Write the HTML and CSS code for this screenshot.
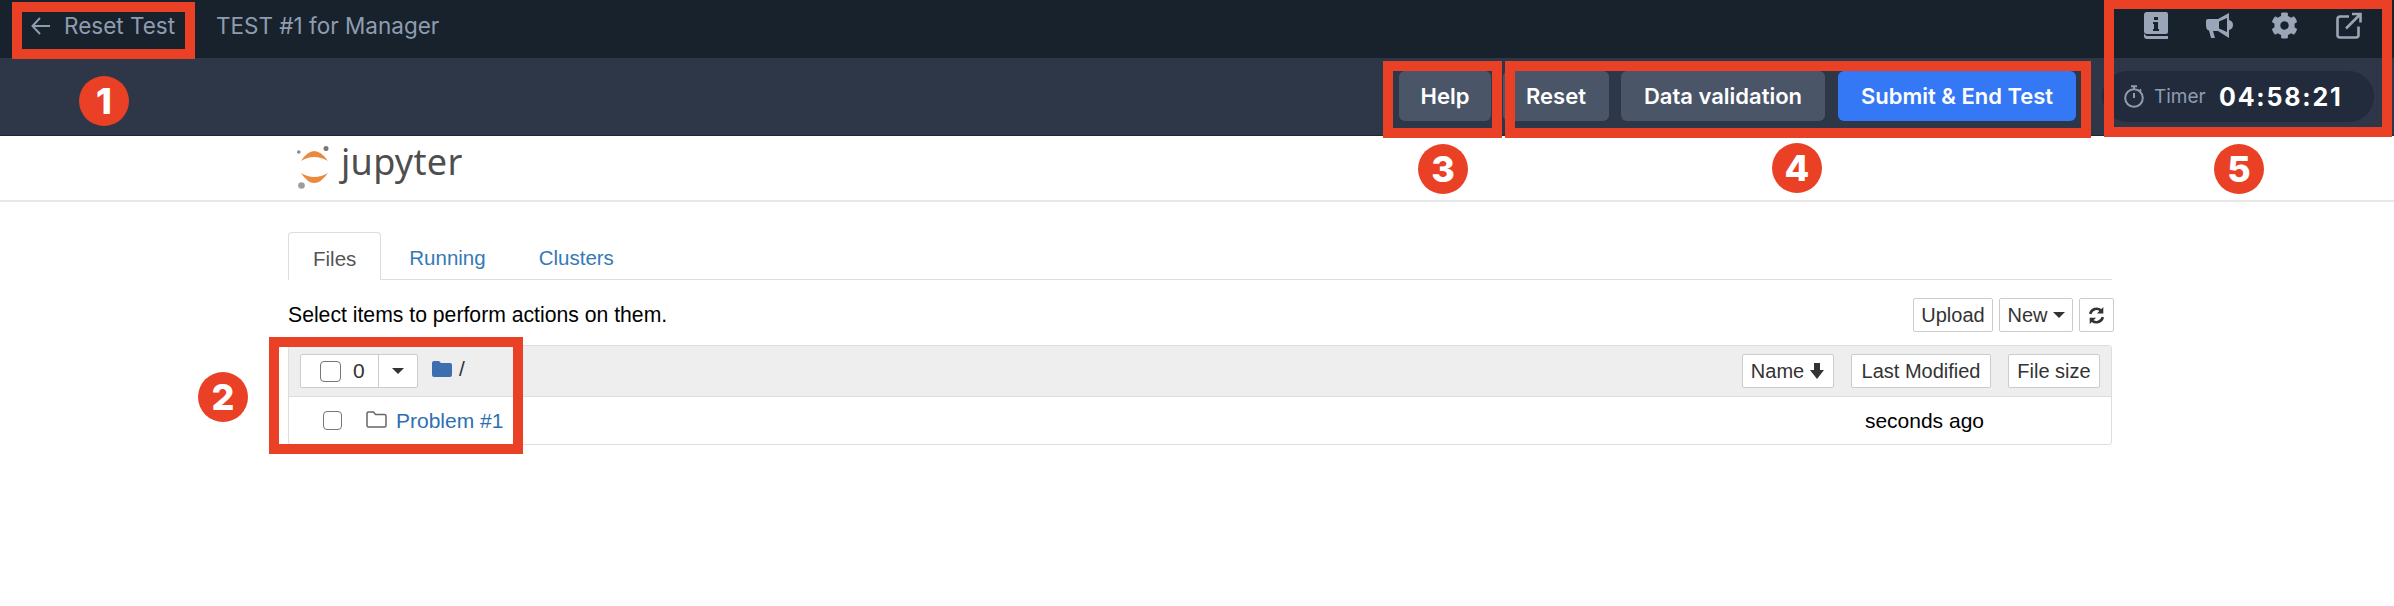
FILE: index.html
```html
<!DOCTYPE html>
<html lang="en">
  <head>
    <meta charset="UTF-8" />
    <title>TEST #1 for Manager</title>
    <link rel="stylesheet" href="styles.css">
  </head>
  <body>
    <header class="topbar">
      <svg class="back-icon" viewBox="0 0 19 18"><path d="M9 1 1.500 9 9 17M2 9h17" /></svg>
      <span class="back-label">Reset Test</span>
      <span class="test-title">TEST #1 for Manager</span>
      <div class="top-icons">
        <svg class="icon-book" viewBox="0 0 24 27"><path fill-rule="evenodd" d="M3 0h19a2 2 0 0 1 2 2v18a2 2 0 0 1-2 2H3a3 3 0 0 1-3-3V3a3 3 0 0 1 3-3zm7 5v3h4V5zm-1 5v2h1v5H9v2h6v-2h-1v-7z" /><path d="M0 21q1 3 3 3h21v3H3q-3 0-3-3z" /></svg>
        <svg class="icon-horn" viewBox="0 0 27 25"><path fill-rule="evenodd" d="M2 6h10L23 0v7q4 1 4 5t-4 5v8L12 18H7l2 7H5L3 17.500Q0 17 0 12V8q0-2 2-2zm11 2.500v7l8 3.500V5z" /></svg>
        <svg class="icon-gear" viewBox="0 0 512 512"><path d="M487.4 315.7l-42.6-24.6c4.3-23.2 4.3-47 0-70.2l42.6-24.6c4.9-2.8 7.1-8.6 5.5-14-11.1-35.6-30-67.8-54.7-94.6-3.8-4.1-10-5.1-14.8-2.3L380.8 110c-17.9-15.4-38.5-27.3-60.8-35.1V25.8c0-5.6-3.9-10.5-9.4-11.7-36.7-8.2-74.3-7.8-109.2 0-5.5 1.2-9.4 6.1-9.4 11.7V75c-22.2 7.9-42.8 19.8-60.8 35.1L88.7 85.5c-4.9-2.8-11-1.9-14.8 2.3-24.7 26.7-43.6 58.9-54.7 94.6-1.7 5.4.6 11.2 5.5 14L67.3 221c-4.3 23.2-4.3 47 0 70.2l-42.6 24.6c-4.9 2.8-7.1 8.6-5.5 14 11.1 35.6 30 67.8 54.7 94.6 3.8 4.1 10 5.1 14.8 2.3l42.6-24.6c17.9 15.4 38.5 27.3 60.8 35.1v49.2c0 5.6 3.9 10.5 9.4 11.7 36.7 8.2 74.3 7.8 109.2 0 5.5-1.2 9.4-6.1 9.4-11.7v-49.2c22.2-7.9 42.8-19.8 60.8-35.1l42.6 24.6c4.9 2.8 11 1.9 14.8-2.3 24.7-26.7 43.6-58.9 54.7-94.6 1.5-5.5-.7-11.3-5.6-14.1zM256 336c-44.1 0-80-35.9-80-80s35.9-80 80-80 80 35.9 80 80-35.9 80-80 80z" /></svg>
        <svg class="icon-open" viewBox="0 0 26 26"><path d="M13 4H4a2.500 2.500 0 0 0-2.500 2.500v16A2.500 2.500 0 0 0 4 25h16a2.500 2.500 0 0 0 2.500-2.500V14M10 16 24 2M16 1.500h8.500V10" /></svg>
      </div>
    </header>

    <div class="toolbar">
      <button class="btn btn-help">Help</button>
      <button class="btn btn-reset">Reset</button>
      <button class="btn btn-validate">Data validation</button>
      <button class="btn btn-submit">Submit &amp; End Test</button>
      <div class="timer">
        <svg class="timer-icon" viewBox="0 0 20 23"><circle cx="10" cy="13" r="8.800" /><path d="M7 1.200h6M10 1.500v3M10 8v5M17 4.500l-1.500 1.500" /></svg>
        <span class="timer-label">Timer</span>
        <span class="timer-value">04:58:21</span>
      </div>
    </div>

    <div class="jp-header">
      <svg class="jp-logo" viewBox="0 0 33 44">
        <path fill="#e98a3c" d="M4 15Q17 -5 31 15 17 7 4 15zM4 27Q17 35 31 27 17 47 4 27z" />
        <circle cx="29" cy="2.500" r="2.500" fill="#767677" />
        <circle cx="1.800" cy="6" r="1.800" fill="#8a8a8a" />
        <circle cx="4.500" cy="39.500" r="3.300" fill="#9e9e9e" />
      </svg>
      <span class="jp-word">jupyter</span>
    </div>

    <main class="container">
      <ul class="tabs">
        <li class="tab active">Files</li>
        <li class="tab">Running</li>
        <li class="tab">Clusters</li>
      </ul>

      <div class="actions">
        <span class="select-text">Select items to perform actions on them.</span>
        <div class="action-btns">
          <span class="small-btn btn-upload">Upload</span>
          <span class="small-btn btn-new">New <i class="caret"></i></span>
          <span class="small-btn btn-refresh">
            <svg viewBox="0 0 20 20"><path d="M2.500 8A8 8 0 0 1 16 4.500M17.500 12A8 8 0 0 1 4 15.500" /><path class="solid" d="M18 0v7.500h-7.500zM2 20v-7.500h7.500z" /></svg>
          </span>
        </div>
      </div>

      <section class="file-list">
        <div class="list-head">
          <div class="select-group">
            <span class="select-left"><i class="check"></i><span>0</span></span>
            <span class="select-right"><i class="caret"></i></span>
          </div>
          <svg class="folder-solid" viewBox="0 0 20 16"><path d="M2 0h5l2 2h9a2 2 0 0 1 2 2v10a2 2 0 0 1-2 2H2a2 2 0 0 1-2-2V2a2 2 0 0 1 2-2z" /></svg>
          <span class="crumb">/</span>
          <div class="sort-btns">
            <span class="small-btn sort-name">Name
              <svg viewBox="0 0 16 16"><path d="M5 0h6v7h4l-7 9-7-9h4z" /></svg>
            </span>
            <span class="small-btn sort-modified">Last Modified</span>
            <span class="small-btn sort-size">File size</span>
          </div>
        </div>
        <div class="list-row">
          <i class="check check-row"></i>
          <svg class="folder-line" viewBox="0 0 21 17"><path d="M2.500 1h5l2 2.500h9a1.500 1.500 0 0 1 1.500 1.500v9.500a1.500 1.500 0 0 1-1.500 1.500h-16A1.500 1.500 0 0 1 1 14.500v-12A1.500 1.500 0 0 1 2.500 1z" /></svg>
          <span class="file-name">Problem #1</span>
          <span class="file-time">seconds ago</span>
        </div>
      </section>
    </main>

    <div class="mark mark-1"></div>
    <div class="mark mark-2"></div>
    <div class="mark mark-3"></div>
    <div class="mark mark-4"></div>
    <div class="mark mark-5"></div>
    <div class="badge badge-1">1</div>
    <div class="badge badge-2">2</div>
    <div class="badge badge-3">3</div>
    <div class="badge badge-4">4</div>
    <div class="badge badge-5">5</div>
  </body>
</html>
```

FILE: styles.css
```css
html,
body {
  margin: 0;
  padding: 0;
  background-color: #fff;
  font-family: "Liberation Sans", sans-serif;
  overflow: hidden;
}
.topbar {
  display: flex;
  align-items: center;
  height: 58px;
  padding: 0 32px 7px 31px;
  box-sizing: border-box;
  background-color: #18222c;
  font-family: Inter, sans-serif;
  font-size: 22.500px;
  color: #8f9cb0;
}
.back-icon {
  width: 19px;
  height: 18px;
  margin-right: 14px;
  fill: none;
  stroke: #8f9cb0;
  stroke-width: 2;
}
.back-label {
  width: 111px;
  white-space: nowrap;
}
.test-title {
  margin-left: 41px;
}
.top-icons {
  display: flex;
  align-items: center;
  margin-left: auto;
  gap: 38px;
  height: 27px;
}
.top-icons svg {
  display: block;
  height: 27px;
  fill: #9aa6b8;
}
.icon-book {
  width: 24px;
}
.icon-horn {
  width: 27px;
}
.icon-gear {
  width: 27px;
}
.icon-open {
  width: 26px;
  fill: none !important;
  stroke: #9aa6b8;
  stroke-width: 2.600;
}
.toolbar {
  display: flex;
  align-items: flex-start;
  height: 78px;
  padding: 13px 20px 0 0;
  box-sizing: border-box;
  justify-content: flex-end;
  background-color: #2d3748;
  border-bottom: 1px solid #1f2733;
}
.btn {
  height: 50px;
  padding: 0;
  border: none;
  border-radius: 6px;
  background-color: #4a5568;
  color: #fff;
  font-family: Inter, sans-serif;
  font-size: 22px;
  font-weight: 600;
}
.btn-help {
  width: 92px;
  margin-right: 12px;
}
.btn-reset {
  width: 106px;
  margin-right: 12px;
}
.btn-validate {
  width: 204px;
  margin-right: 13px;
}
.btn-submit {
  width: 238px;
  background-color: #3478f6;
}
.timer {
  display: flex;
  align-items: center;
  width: 272px;
  height: 51px;
  margin-left: 26px;
  padding-left: 22px;
  box-sizing: border-box;
  border-radius: 26px;
  background-color: #222b3b;
  font-family: Inter, sans-serif;
}
.timer-icon {
  width: 20px;
  height: 23px;
  margin-right: 10px;
  fill: none;
  stroke: #8f9cb0;
  stroke-width: 2;
}
.timer-label {
  width: 65px;
  font-size: 19px;
  color: #8f9cb0;
}
.timer-value {
  font-size: 25px;
  font-weight: 700;
  letter-spacing: 1.800px;
  color: #fff;
}
.jp-header {
  display: flex;
  align-items: flex-start;
  height: 64px;
  padding-left: 297px;
  border-bottom: 2px solid #e7e7e7;
}
.jp-logo {
  width: 33px;
  height: 44px;
  margin-top: 10px;
}
.jp-word {
  margin: 1px 0 0 11px;
  font-family: "Noto Sans", sans-serif;
  font-size: 36px;
  line-height: 50px;
  letter-spacing: 0.300px;
  color: #4e4e4e;
}
.container {
  margin: 30px 0 0 288px;
  width: 1824px;
  font-size: 21px;
  color: #000;
}
.tabs {
  display: flex;
  list-style-type: none;
  margin: 0;
  padding: 0;
  height: 47px;
  border-bottom: 1px solid #ddd;
  font-size: 20.500px;
}
.tab {
  height: 47px;
  line-height: 52px;
  padding: 0 25px;
  margin-right: 3px;
  color: #337ab7;
  box-sizing: border-box;
}
.tab.active {
  height: 48px;
  padding: 0 24px;
  background-color: #fff;
  border: 1px solid #ddd;
  border-bottom: none;
  border-radius: 4px 4px 0 0;
  color: #555;
}
.actions {
  display: flex;
  align-items: center;
  justify-content: space-between;
  margin: 18px -2px 13px 0;
  height: 34px;
  line-height: 30px;
}
.select-text {
  font-size: 21.200px;
}
.action-btns {
  display: flex;
  gap: 6px;
}
.small-btn {
  display: flex;
  align-items: center;
  justify-content: center;
  height: 34px;
  box-sizing: border-box;
  background-color: #fff;
  border: 1px solid #ccc;
  border-radius: 2px;
  font-size: 20px;
  color: #333;
}
.btn-upload {
  width: 80px;
}
.btn-new {
  width: 74px;
  gap: 5px;
}
.btn-refresh {
  width: 35px;
}
.btn-refresh svg {
  width: 17px;
  height: 17px;
  fill: none;
  stroke: #333;
  stroke-width: 3;
}
.btn-refresh .solid {
  fill: #333;
  stroke: none;
}
.caret {
  display: inline-block;
  width: 0;
  height: 0;
  border-top: 6px solid #333;
  border-left: 6px solid transparent;
  border-right: 6px solid transparent;
}
.file-list {
  height: 100px;
  box-sizing: border-box;
  border: 1px solid #ddd;
  border-radius: 3px;
}
.list-head {
  display: flex;
  align-items: center;
  height: 51px;
  padding: 0 11px;
  box-sizing: border-box;
  background-color: #eee;
  border-bottom: 1px solid #ddd;
}
.select-group {
  display: flex;
  height: 34px;
  width: 118px;
  box-sizing: border-box;
  background-color: #fff;
  border: 1px solid #ccc;
  border-radius: 2px;
}
.select-left {
  display: flex;
  align-items: center;
  width: 78px;
  padding-left: 19px;
  box-sizing: border-box;
  gap: 12px;
  border-right: 1px solid #ccc;
  color: #333;
}
.select-right {
  display: flex;
  flex: 1;
  align-items: center;
  justify-content: center;
}
.check {
  display: block;
  width: 21px;
  height: 21px;
  box-sizing: border-box;
  background-color: #fff;
  border: 1.500px solid #767676;
  border-radius: 4px;
}
.folder-solid {
  width: 20px;
  height: 16px;
  margin: -4px 0 0 14px;
  fill: #3d6fb0;
}
.crumb {
  margin: -4px 0 0 7px;
  color: #333;
}
.sort-btns {
  display: flex;
  margin-left: auto;
}
.sort-name {
  width: 92px;
  gap: 5px;
}
.sort-name svg {
  width: 16px;
  height: 16px;
  fill: #333;
}
.sort-modified {
  width: 140px;
  margin-left: 17px;
}
.sort-size {
  width: 92px;
  margin-left: 17px;
}
.list-row {
  display: flex;
  align-items: center;
  height: 47px;
  padding-left: 34px;
}
.check-row {
  width: 19px;
  height: 19px;
}
.folder-line {
  width: 21px;
  height: 17px;
  margin: -3px 0 0 24px;
  fill: none;
  stroke: #666;
  stroke-width: 1.500;
}
.file-name {
  margin-left: 9px;
  color: #2f6fb0;
}
.file-time {
  margin-left: auto;
  margin-right: 127px;
}
/* annotations drawn on top of the screenshot */
.mark {
  position: absolute;
  box-sizing: border-box;
  border: 10px solid #ea4025;
}
.mark-1 {
  left: 12px;
  top: 2px;
  width: 183px;
  height: 57px;
}
.mark-2 {
  left: 269px;
  top: 337px;
  width: 254px;
  height: 117px;
}
.mark-3 {
  left: 1383px;
  top: 61px;
  width: 119px;
  height: 77px;
}
.mark-4 {
  left: 1505px;
  top: 61px;
  width: 586px;
  height: 77px;
}
.mark-5 {
  left: 2104px;
  top: -1px;
  width: 288px;
  height: 138px;
}
.badge {
  position: absolute;
  width: 50px;
  height: 50px;
  border-radius: 50%;
  background-color: #ea4025;
  color: #fff;
  font-family: Inter, sans-serif;
  font-size: 36px;
  font-weight: 800;
  line-height: 50px;
  text-align: center;
}
.badge-1 {
  left: 79px;
  top: 76px;
}
.badge-2 {
  left: 198px;
  top: 372px;
}
.badge-3 {
  left: 1418px;
  top: 144px;
}
.badge-4 {
  left: 1772px;
  top: 143px;
}
.badge-5 {
  left: 2214px;
  top: 144px;
}
```
